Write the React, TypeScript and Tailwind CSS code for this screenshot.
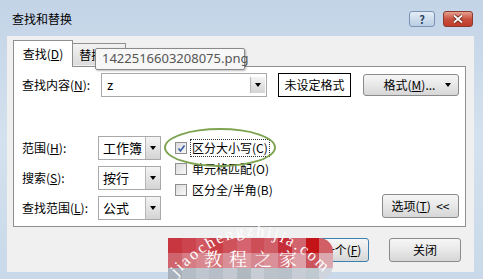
import React from 'react';

const cjk = "font-['Noto_Sans_CJK_SC','Noto_Sans',sans-serif]";

// pixelated watermark colours, 3 rows x 12 columns
const wmRows = [
  ['#c8363f', '#cc444d', '#d2565f', '#c93e47', '#cf525b', '#d66470', '#cd4e57', '#d05e66', '#c52d38', '#d2646e', '#c41418', '#d25e66'],
  ['#d0646c', '#d57c84', '#da8890', '#d6787f', '#da8e96', '#de98a0', '#d6868e', '#da9098', '#d5747c', '#dea0a8', '#cc545c', '#daa8ae'],
  ['#a8b0bc', '#b4bcc6', '#c0c6d0', '#b8bec8', '#c4c8d0', '#b0b8c0', '#c8ccd4', '#bcc2ca', '#b8c0ca', '#c8ccd4', '#c0c8d0', '#d0d4dc'],
];

const Arrow = () => (
  <div className="w-[15px] h-full flex items-center justify-center bg-gradient-to-b from-[#f4f4f4] to-[#d4d4d4] border-l border-[#b8b8b8]">
    <div className="w-0 h-0 border-l-[3.5px] border-r-[3.5px] border-t-[4px] border-l-transparent border-r-transparent border-t-[#000]" />
  </div>
);

const Select = ({ value }: { value: string }) => (
  <div className="w-[63px] h-[24px] flex border border-[#a9a9a9] bg-white">
    <div className="flex-1 flex items-center pl-[4px] text-[13px] text-black">{value}</div>
    <Arrow />
  </div>
);

const Check = ({ checked, label, focus }: { checked?: boolean; label: string; focus?: boolean }) => (
  <div className="flex items-center h-[18px]">
    <div className="w-[12px] h-[12px] border border-[#8f8f8f] bg-gradient-to-br from-[#dcdcdc] to-[#f8f8f8] flex items-center justify-center">
      {checked && (
        <svg width="9" height="9" viewBox="0 0 9 9">
          <path d="M1.5 4.5 L3.5 7 L7.5 1.5" stroke="#3a5fa8" strokeWidth="1.6" fill="none" />
        </svg>
      )}
    </div>
    <div className={`ml-[3px] px-[1px] text-[12px] leading-[16px] text-black ${focus ? 'border border-dotted border-[#333]' : 'border border-transparent'}`}>
      {label}
    </div>
  </div>
);

const Btn = ({ children, w, primary }: { children: React.ReactNode; w: string; primary?: boolean }) => (
  <div
    className={`${w} h-[24px] rounded-[3px] border ${primary ? 'border-[#3c7fb1]' : 'border-[#8a8a8a]'} bg-gradient-to-b from-[#f6f6f6] via-[#e8e8e8] to-[#d6d6d6] flex items-center justify-center text-[12px] text-black`}
  >
    {children}
  </div>
);

export default function App() {
  return (
    <div className={`w-[483px] h-[279px] relative overflow-hidden bg-gradient-to-b from-[#c3d4e7] via-[#d4e1ee] to-[#c9d9e9] ${cjk}`}>
      {/* title bar */}
      <div className="h-[36px] flex items-start justify-between pl-[12px] pr-[10px]">
        <div className="mt-[10px] text-[12px] text-black">查找和替换</div>
        <div className="flex mt-[11px] gap-[8px]">
          <div className="w-[26px] h-[16px] rounded-[3px] border border-[#7a93b3] bg-gradient-to-b from-[#e4edf6] to-[#b9cde3] flex items-center justify-center text-[11px] leading-none text-[#2b3f5c] font-bold">
            ?
          </div>
          <div className="w-[30px] h-[16px] rounded-[3px] border border-[#8a3a30] bg-gradient-to-b from-[#e6a090] via-[#c8503e] to-[#c03a28] flex items-center justify-center">
            <svg width="12" height="10" viewBox="0 0 12 10">
              <path d="M2 1.5 L10 8.5 M10 1.5 L2 8.5" stroke="#5a1a10" strokeWidth="3.2" />
              <path d="M2 1.5 L10 8.5 M10 1.5 L2 8.5" stroke="#ffffff" strokeWidth="1.8" />
            </svg>
          </div>
        </div>
      </div>

      {/* client area */}
      <div className="ml-[7px] mr-[9px] h-[236px] bg-[#f0f0f0] flex flex-col px-[6px] pt-[4px]">
        {/* tabs */}
        <div className="flex items-start h-[27px]">
          <div className="relative z-10 w-[60px] h-[27px] bg-white border border-b-0 border-[#8e8f8f] flex items-center justify-center text-[12px] text-black">
            查找(<span className="underline">D</span>)
          </div>
          <div className="mt-[3px] w-[53px] h-[22px] bg-gradient-to-b from-[#f2f2f2] to-[#dcdcdc] border border-l-0 border-b-0 border-[#8e8f8f] flex items-center justify-center text-[12px] text-black">
            替换(<span className="underline">P</span>)
          </div>
        </div>

        {/* panel */}
        <div className="-mt-px w-[453px] h-[161px] bg-white border border-[#8e8f8f] flex flex-col pt-[6px] pl-[8px]">
          <div className="flex items-center h-[24px]">
            <div className="w-[79px] text-[12px] text-black">
              查找内容(<span className="underline">N</span>):
            </div>
            <div className="w-[166px] h-[24px] flex border border-[#a9a9a9] bg-white">
              <div className="flex-1 flex items-center pl-[5px] text-[13px] text-black">z</div>
              <div className="py-[3px] pr-[1px] h-full">
                <Arrow />
              </div>
            </div>
            <div className="ml-[11px] w-[73px] h-[24px] border border-black flex items-center justify-center text-[12px] text-black">
              未设定格式
            </div>
            <div className="ml-[12px] w-[96px] h-[22px] rounded-[3px] border border-[#8a8a8a] bg-gradient-to-b from-[#f6f6f6] via-[#e8e8e8] to-[#d6d6d6] flex items-center text-[12px] text-black">
              <span className="flex-1 text-center pl-[10px]">
                格式(<span className="underline">M</span>)...
              </span>
              <span className="mr-[7px] w-0 h-0 border-l-[3px] border-r-[3px] border-t-[4px] border-l-transparent border-r-transparent border-t-black" />
            </div>
          </div>

          <div className="flex mt-[39px]">
            <div className="flex flex-col gap-[6px]">
              {[
                ['范围', 'H', '工作簿'],
                ['搜索', 'S', '按行'],
                ['查找范围', 'L', '公式'],
              ].map(([l, k, v]) => (
                <div key={k} className="flex items-center">
                  <div className="w-[76px] text-[12px] text-black">
                    {l}(<span className="underline">{k}</span>):
                  </div>
                  <Select value={v} />
                </div>
              ))}
            </div>
            <div className="ml-[14px] mt-[3px] flex flex-col gap-[3px]">
              <Check checked focus label="区分大小写(C)" />
              <Check label="单元格匹配(O)" />
              <Check label="区分全/半角(B)" />
            </div>
            <div className="ml-auto mr-[6px] self-end mb-[2px]">
              <Btn w="w-[77px]">
                选项(<span className="underline">T</span>) &nbsp;&lt;&lt;
              </Btn>
            </div>
          </div>
        </div>

        {/* bottom buttons */}
        <div className="flex justify-end gap-[20px] pr-[7px] mt-[11px]">
          <Btn w="w-[90px]" primary>
            查找下一个(<span className="underline">F</span>)
          </Btn>
          <Btn w="w-[72px]">关闭</Btn>
        </div>
      </div>

      {/* tooltip over the tabs */}
      <div className="absolute left-[95px] top-[48px] w-[150px] h-[22px] bg-[#f7f7f7] border border-[#8a8a8a] rounded-[2px] shadow-[1px_1px_2px_rgba(0,0,0,0.25)] flex items-center pl-[6px] text-[13px] text-[#555] font-['Noto_Sans',sans-serif]">
        1422516603208075.png
      </div>

      {/* green highlight ellipse */}
      <div className="absolute left-[164px] top-[128px] w-[112px] h-[39px] rounded-[50%] border-[2.5px] border-[#7fa451]" />

      {/* watermark */}
      <div className="absolute left-[168px] top-[238px] w-[165px] h-[41px] rounded-r-[14px] overflow-hidden">
        <div className="flex flex-col">
          {wmRows.map((row, i) => (
            <div key={i} className={`flex ${i === 2 ? 'h-[12px]' : 'h-[15px]'}`}>
              {row.map((c, j) => (
                <div key={j} className="flex-1" style={{ backgroundColor: c }} />
              ))}
            </div>
          ))}
        </div>
      </div>
      <svg className="absolute left-[160px] top-[220px]" width="180" height="59" viewBox="160 220 180 59">
        <defs>
          <path id="arc" d="M170 284 Q252 188 334 284" />
        </defs>
        <text fill="#ffffff" fontFamily="'Liberation Serif', serif" fontSize="16" textLength="170">
          <textPath href="#arc" startOffset="10">jiaochengzhijia.com</textPath>
        </text>
        <text x="204" y="266" fill="#ffffff" fontFamily="'Noto Serif CJK SC','Noto Sans CJK SC',serif" fontSize="18" letterSpacing="7">
          教程之家
        </text>
      </svg>
    </div>
  );
}
